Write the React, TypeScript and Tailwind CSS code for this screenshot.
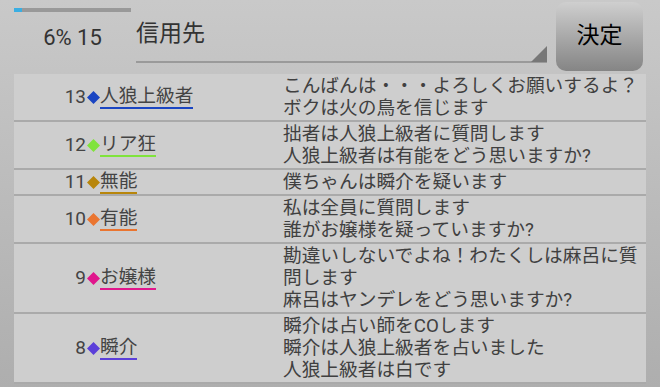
import React from "react";

type Row = { n: number; color: string; name: string; lines: string[] };

const rows: Row[] = [
  { n: 13, color: "#1a45c2", name: "人狼上級者", lines: ["こんばんは・・・よろしくお願いするよ？", "ボクは火の鳥を信じます"] },
  { n: 12, color: "#80e33c", name: "リア狂", lines: ["拙者は人狼上級者に質問します", "人狼上級者は有能をどう思いますか?"] },
  { n: 11, color: "#b8860b", name: "無能", lines: ["僕ちゃんは瞬介を疑います"] },
  { n: 10, color: "#ea7530", name: "有能", lines: ["私は全員に質問します", "誰がお嬢様を疑っていますか?"] },
  { n: 9, color: "#e0168c", name: "お嬢様", lines: ["勘違いしないでよね！わたくしは麻呂に質問します", "麻呂はヤンデレをどう思いますか?"] },
  { n: 8, color: "#5b3fd9", name: "瞬介", lines: ["瞬介は占い師をCOします", "瞬介は人狼上級者を占いました", "人狼上級者は白です"] },
];

const font = { fontFamily: 'Roboto, "Noto Sans CJK JP", sans-serif' };

export default function App() {
  return (
    <div
      className="w-[660px] h-[387px] overflow-hidden bg-gradient-to-b from-[#c9c9c9] to-[#aeaeae] text-[#404040]"
      style={font}
    >
      <div className="flex h-[74px]">
        <div className="ml-[14px] w-[117px] flex flex-col">
          <div className="mt-[8px] h-[4px] bg-[#999999] flex">
            <div className="w-[8px] h-full bg-[#3aaee2]" />
          </div>
          <div className="mt-[13px] text-center text-[22px] leading-[26px] text-[#333333]">6% 15</div>
        </div>
        <div className="ml-[5px] w-[411px] relative">
          <div className="pt-[19px] text-[23px] leading-[30px] text-[#333333]">信用先</div>
          <div className="absolute left-0 right-0 top-[61px] h-[2px] bg-[#9a9a9a]" />
          <svg className="absolute right-0 top-[46px]" width="16" height="16" viewBox="0 0 16 16">
            <polygon points="16,0 16,16 0,16" fill="#777777" />
          </svg>
        </div>
        <div className="ml-[9px] mt-[2px] w-[87px] h-[69px] rounded-[10px] bg-gradient-to-b from-[#cfcfcf] to-[#858585] flex items-center justify-center text-[23px] text-black">
          決定
        </div>
      </div>
      <div className="ml-[14px] w-[632px] bg-[#cecece]">
        {rows.map((r) => (
          <div key={r.n} className="flex border-b-2 border-[#aaaaaa]">
            <div className="w-[269px] flex items-center">
              <span className="w-[72px] text-right text-[19px] leading-[22px] text-[#444444]">{r.n}</span>
              <svg className="ml-[1px]" width="13" height="13" viewBox="0 0 13 13">
                <polygon points="6.5,0 13,6.5 6.5,13 0,6.5" fill={r.color} />
              </svg>
              <span
                className="text-[18.7px] leading-[22px] border-b-2 text-[#444444]"
                style={{ borderColor: r.color }}
              >
                {r.name}
              </span>
            </div>
            <div className="flex-1 py-[1px] text-[18.7px] leading-[22px] text-[#404040]">
              {r.lines.map((l, i) => (
                <div key={i}>{l}</div>
              ))}
            </div>
          </div>
        ))}
      </div>
    </div>
  );
}
